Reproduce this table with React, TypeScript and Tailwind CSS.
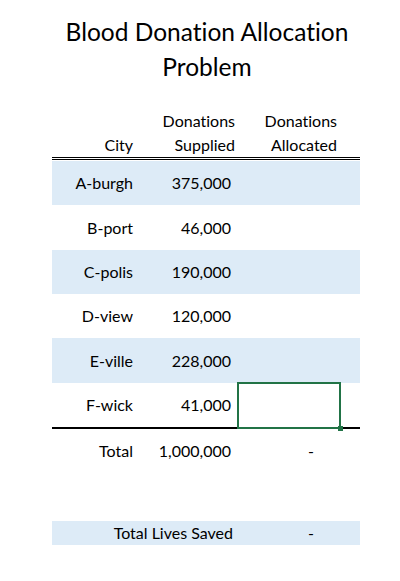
const rows = [
  { city: "A-burgh", supplied: "375,000", h: "h-[44px]" },
  { city: "B-port", supplied: "46,000", h: "h-[45px]" },
  { city: "C-polis", supplied: "190,000", h: "h-[44px]" },
  { city: "D-view", supplied: "120,000", h: "h-[44px]" },
  { city: "E-ville", supplied: "228,000", h: "h-[45px]" },
  { city: "F-wick", supplied: "41,000", h: "h-[44px]" },
];

const grid = "grid grid-cols-[90px_95px_104px_19px]";

export default function App() {
  return (
    <div className="min-h-[581px] w-[400px] bg-white pt-[14px] font-['Lato',sans-serif] text-black [font-variant-ligatures:none]">
      <h1 className="pl-[14px] text-center text-[24.5px] leading-[35px]">
        Blood Donation Allocation
        <br />
        Problem
      </h1>

      <div className="ml-[52px] mt-[25px] w-[308px] text-[16px]">
        {/* header */}
        <div className={`${grid} h-[51px] border-b-[3px] border-double border-black leading-[24px]`}>
          <div className="self-end pr-[9px] text-right">City</div>
          <div className="pr-[2px] text-right">
            Donations
            <br />
            Supplied
          </div>
          <div className="pr-[4px] text-right">
            Donations
            <br />
            Allocated
          </div>
          <div />
        </div>

        {/* cities */}
        <div className="mt-px">
          {rows.map((r, i) => (
            <div
              key={r.city}
              className={`${grid} ${r.h} items-center ${i % 2 === 0 ? "bg-[#ddebf7]" : ""}`}
            >
              <div className="pr-[9px] text-right">{r.city}</div>
              <div className="pr-[6px] text-right">{r.supplied}</div>
              <div className="relative h-full">
                {r.city === "F-wick" && (
                  <div className="absolute inset-x-0 -bottom-[2px] -top-px border-2 border-[#217346]">
                    <span className="absolute -bottom-[4px] -right-[4px] h-[5px] w-[5px] bg-[#217346]" />
                  </div>
                )}
              </div>
              <div />
            </div>
          ))}
        </div>
        <div className="h-[2px] bg-black" />

        {/* total */}
        <div className={`${grid} h-[44px] items-center`}>
          <div className="pr-[9px] text-right">Total</div>
          <div className="pr-[6px] text-right">1,000,000</div>
          <div className="pr-[27px] text-right">-</div>
          <div />
        </div>

        {/* lives saved */}
        <div className={`${grid} mt-[48px] h-[24px] items-center bg-[#ddebf7]`}>
          <div className="col-span-2 pr-[4px] text-right">Total Lives Saved</div>
          <div className="pr-[27px] text-right">-</div>
          <div />
        </div>
      </div>
    </div>
  );
}
